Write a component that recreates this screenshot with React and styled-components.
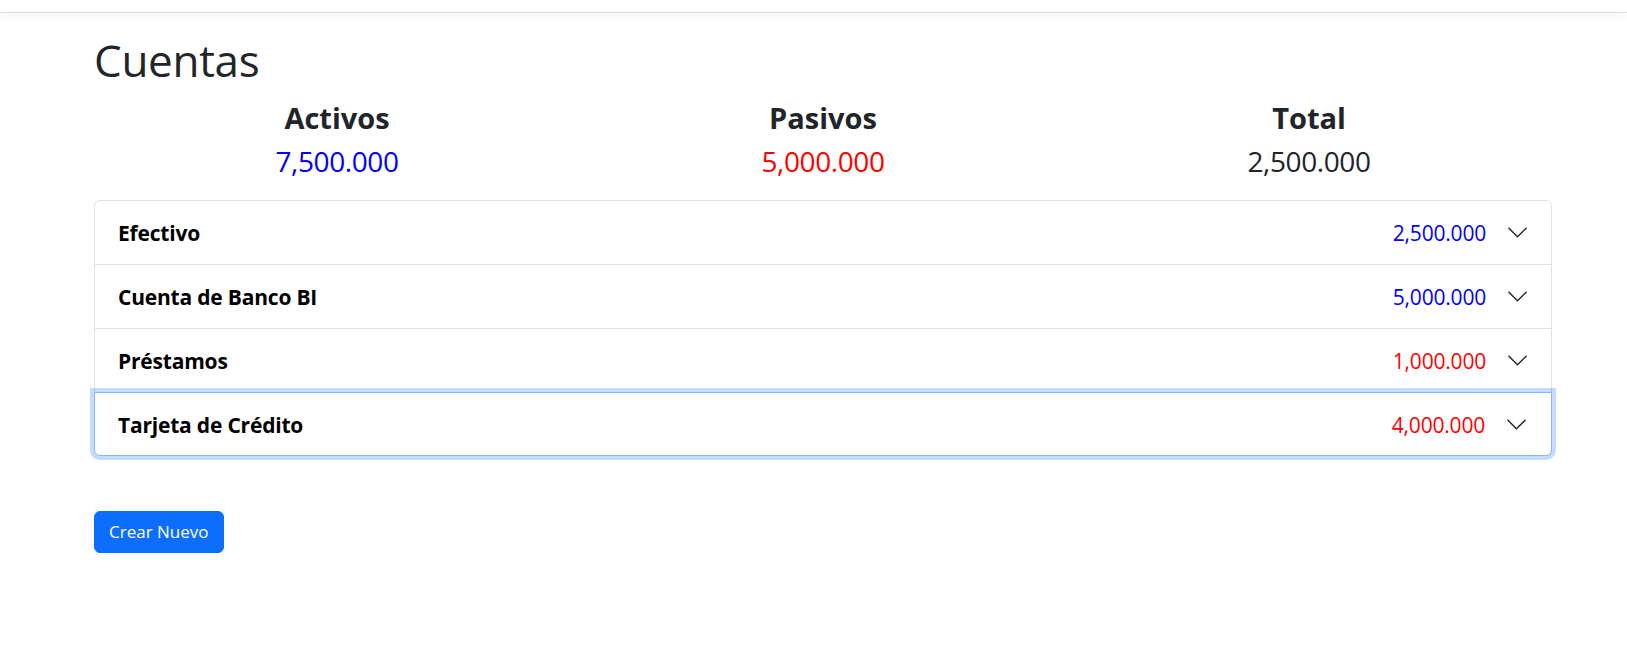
import styled, { createGlobalStyle } from "styled-components";

const GlobalStyle = createGlobalStyle`
  * { box-sizing: border-box; }
  body {
    margin: 0;
    background: #fff;
    color: #212529;
    font-family: "Open Sans", "Noto Sans", sans-serif;
  }
`;

const accounts = [
  { name: "Efectivo", amount: "2,500.000", kind: "asset" },
  { name: "Cuenta de Banco BI", amount: "5,000.000", kind: "asset" },
  { name: "Préstamos", amount: "1,000.000", kind: "debt" },
  { name: "Tarjeta de Crédito", amount: "4,000.000", kind: "debt", focused: true },
];

const Chevron = () => (
  <svg width="23" height="23" viewBox="0 0 16 16" fill="#212529">
    <path
      fillRule="evenodd"
      d="M1.646 4.646a.5.5 0 0 1 .708 0L8 10.293l5.646-5.647a.5.5 0 0 1 .708.708l-6 6a.5.5 0 0 1-.708 0l-6-6a.5.5 0 0 1 0-.708z"
    />
  </svg>
);

const App = () => {
  return (
    <>
      <GlobalStyle />
      <NavBar />
      <Main>
        <Title>Cuentas</Title>
        <Summary>
          <SummaryCol>
            <Label>Activos</Label>
            <Value tone="asset">7,500.000</Value>
          </SummaryCol>
          <SummaryCol>
            <Label>Pasivos</Label>
            <Value tone="debt">5,000.000</Value>
          </SummaryCol>
          <SummaryCol>
            <Label>Total</Label>
            <Value>2,500.000</Value>
          </SummaryCol>
        </Summary>
        <Accordion>
          {accounts.map((a) => (
            <Item key={a.name} focused={a.focused}>
              <ItemButton focused={a.focused}>
                <ItemName>{a.name}</ItemName>
                <ItemAmount tone={a.kind}>{a.amount}</ItemAmount>
                <Chevron />
              </ItemButton>
            </Item>
          ))}
        </Accordion>
        <CreateButton>Crear Nuevo</CreateButton>
      </Main>
    </>
  );
};

const toneColor = (tone) =>
  tone === "asset" ? "#0000ff" : tone === "debt" ? "#ff0000" : "#212529";

const NavBar = styled.div`
  height: 13px;
  border-bottom: 1px solid #dedfe1;
  box-shadow: 0 3px 14px rgba(0, 0, 0, 0.05);
`;

const Main = styled.main`
  width: 1458px;
  margin-left: 94px;
  padding-top: 21px;
`;

const Title = styled.h1`
  margin: 0;
  font-size: 44px;
  font-weight: 500;
  line-height: 1.2;
  letter-spacing: -0.3px;
`;

const Summary = styled.div`
  display: grid;
  grid-template-columns: repeat(3, 1fr);
  margin-top: 11px;
`;

const SummaryCol = styled.div`
  display: flex;
  flex-direction: column;
  align-items: center;
  gap: 4px;
`;

const Label = styled.h3`
  margin: 0;
  font-size: 29px;
  font-weight: 700;
  line-height: 1.4;
`;

const Value = styled.h3`
  margin: 0;
  font-size: 28px;
  font-weight: 400;
  line-height: 1.4;
  color: ${(p) => toneColor(p.tone)};
  letter-spacing: -0.4px;
`;

const Accordion = styled.div`
  margin-top: 18px;
  border: 1px solid #dee2e6;
  border-radius: 6px;
`;

const Item = styled.div`
  position: relative;
  & + & {
    border-top: 1px solid #dee2e6;
  }
  ${(p) => p.focused && "border-top-color: #86b7fe !important;"}
`;

const ItemButton = styled.div`
  display: flex;
  align-items: center;
  height: 63px;
  padding: 1px 22px 0 23px;
  gap: 20px;
  border-radius: 0 0 6px 6px;
  ${(p) =>
    p.focused &&
    `
    margin: -1px -1px -1px -1px;
    height: 64px;
    padding: 2px 23px 0 23px;
    border: 1px solid #86b7fe;
    box-shadow: 0 0 0 4px rgba(13, 110, 253, 0.25);
    position: relative;
    z-index: 2;
  `}
`;

const ItemName = styled.div`
  flex: 1;
  font-size: 21px;
  font-weight: 700;
  color: #000;
  letter-spacing: -0.2px;
`;

const ItemAmount = styled.div`
  font-size: 21px;
  color: ${(p) => toneColor(p.tone)};
  letter-spacing: -0.2px;
`;

const CreateButton = styled.button`
  margin-top: 55px;
  height: 42px;
  padding: 0 14px;
  border: 1px solid #0d6efd;
  border-radius: 6px;
  background: #0d6efd;
  color: #fff;
  font-family: inherit;
  font-size: 17px;
  cursor: pointer;
`;

export default App;
